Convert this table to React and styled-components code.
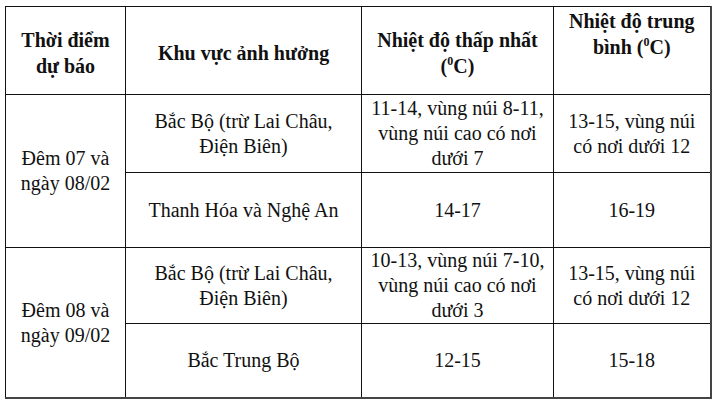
import React from "react";
import styled, { createGlobalStyle } from "styled-components";

const Global = createGlobalStyle`
  body {
    margin: 0;
    background: #fff;
    font-family: "Liberation Serif", "Times New Roman", serif;
    color: #111;
  }
`;

const Wrap = styled.div`
  padding: 6px 0 0 5px;
`;

const Table = styled.table`
  width: 705px;
  table-layout: fixed;
  border-collapse: collapse;
  border-right: 2px solid #444;
  border-bottom: 2px solid #444;
  font-family: "Liberation Serif", "Times New Roman", serif;
  color: #111;
  font-size: 20px;
  line-height: 25px;
`;

const Th = styled.th`
  border: 1px solid #111;
  height: 83px;
  padding: ${(p) => (p.$top ? "1px 4px 0" : "4px 4px 0")};
  vertical-align: ${(p) => (p.$top ? "top" : "middle")};
  font-weight: bold;
  text-align: center;
  line-height: 26px;
`;

const Td = styled.td`
  border: 1px solid #111;
  height: ${(p) => p.$h}px;
  padding: 0 4px;
  vertical-align: middle;
  text-align: center;
  font-weight: normal;
`;

const Sup = styled.sup`
  font-size: 12px;
  line-height: 0;
  vertical-align: 8px;
`;

const Deg = () => (
  <>
    (<Sup>0</Sup>C)
  </>
);

const groups = [
  {
    time: ["Đêm 07 và", "ngày 08/02"],
    rows: [
      {
        area: ["Bắc Bộ (trừ Lai Châu,", "Điện Biên)"],
        min: ["11-14, vùng núi 8-11,", "vùng núi cao có nơi", "dưới 7"],
        avg: ["13-15, vùng núi", "có nơi dưới 12"],
        h: 77,
      },
      { area: ["Thanh Hóa và Nghệ An"], min: ["14-17"], avg: ["16-19"], h: 74 },
    ],
  },
  {
    time: ["Đêm 08 và", "ngày 09/02"],
    rows: [
      {
        area: ["Bắc Bộ (trừ Lai Châu,", "Điện Biên)"],
        min: ["10-13, vùng núi 7-10,", "vùng núi cao có nơi", "dưới 3"],
        avg: ["13-15, vùng núi", "có nơi dưới 12"],
        h: 75,
      },
      { area: ["Bắc Trung Bộ"], min: ["12-15"], avg: ["15-18"], h: 73 },
    ],
  },
];

const Lines = ({ items }) =>
  items.map((t, i) => (
    <React.Fragment key={i}>
      {i > 0 && <br />}
      {t}
    </React.Fragment>
  ));

export default function App() {
  return (
    <Wrap>
      <Global />
      <Table>
        <colgroup>
          <col style={{ width: 120 }} />
          <col style={{ width: 236 }} />
          <col style={{ width: 192 }} />
          <col style={{ width: 157 }} />
        </colgroup>
        <thead>
          <tr>
            <Th>
              Thời điểm
              <br />
              dự báo
            </Th>
            <Th>Khu vực ảnh hưởng</Th>
            <Th>
              Nhiệt độ thấp nhất
              <br />
              <Deg />
            </Th>
            <Th $top>
              Nhiệt độ trung
              <br />
              bình <Deg />
            </Th>
          </tr>
        </thead>
        <tbody>
          {groups.map((g, gi) =>
            g.rows.map((r, ri) => (
              <tr key={gi + "-" + ri}>
                {ri === 0 && (
                  <Td rowSpan={g.rows.length}>
                    <Lines items={g.time} />
                  </Td>
                )}
                <Td $h={r.h}>
                  <Lines items={r.area} />
                </Td>
                <Td $h={r.h}>
                  <Lines items={r.min} />
                </Td>
                <Td $h={r.h}>
                  <Lines items={r.avg} />
                </Td>
              </tr>
            ))
          )}
        </tbody>
      </Table>
    </Wrap>
  );
}
